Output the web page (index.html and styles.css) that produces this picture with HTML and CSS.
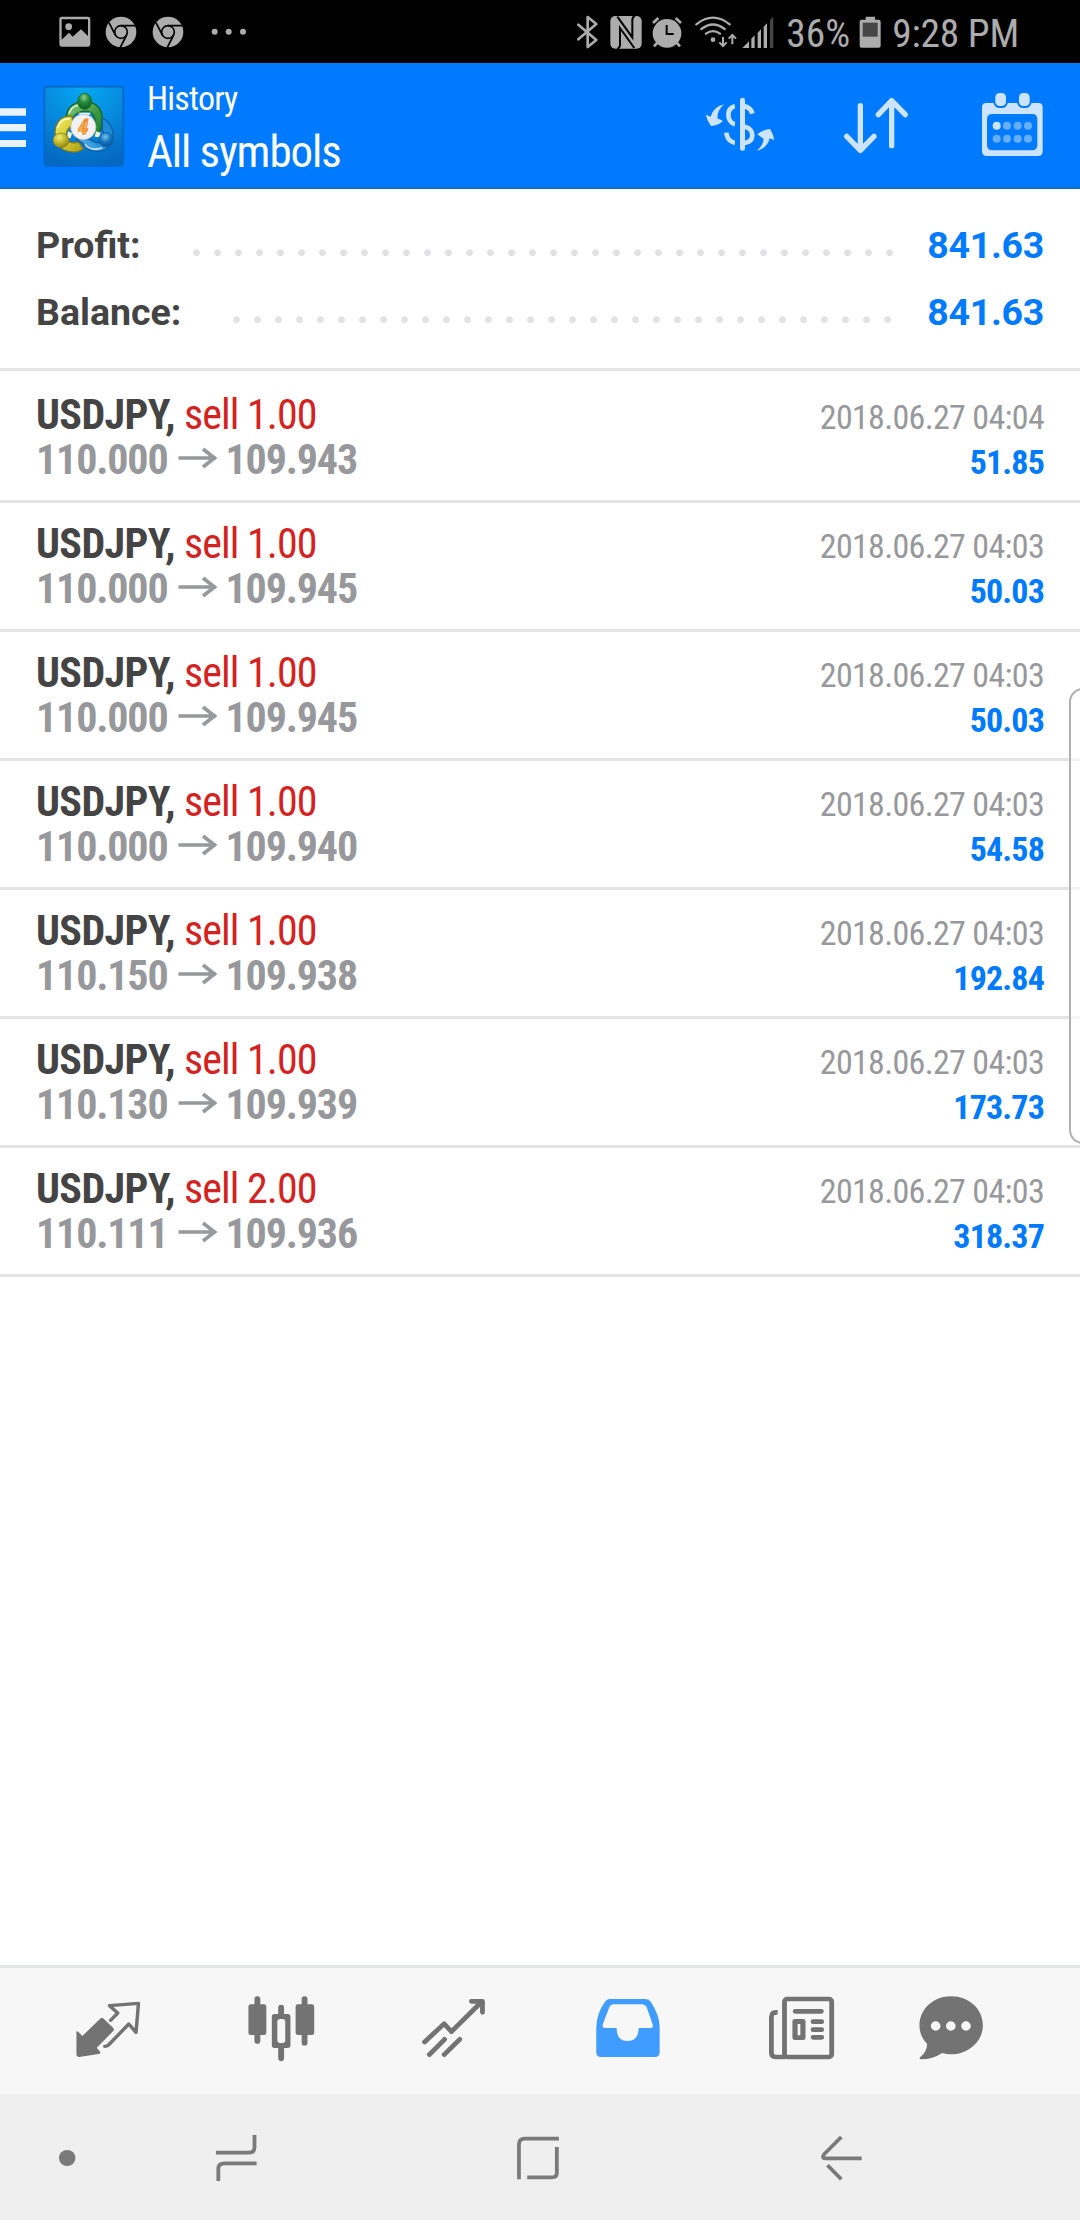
FILE: index.html
```html
<!DOCTYPE html>
<html lang="en">
<head>
<meta charset="utf-8">
<title>History</title>
<link rel="stylesheet" href="styles.css">
</head>
<body>
<div class="status">
  <svg class="st-icon" width="36" height="36" viewBox="170 40 108 108"><path fill-rule="evenodd" d="M184 48H263Q270 48 270 55V131Q270 138 263 138H184Q177 138 177 131V55Q177 48 184 48ZM184 56V117L206 96L217 108L242 86L263 106V56Z"/><circle cx="205" cy="78" r="10"/></svg>
  <svg class="st-icon" width="36" height="36" viewBox="310 40 108 108"><circle cx="364" cy="94" r="46"/><g class="chrome-lines"><circle cx="364" cy="94" r="19"/><path d="M364 75H408M347 103L328 66M381 103L361 142"/></g></svg>
  <svg class="st-icon" width="36" height="36" viewBox="310 40 108 108"><circle cx="364" cy="94" r="46"/><g class="chrome-lines"><circle cx="364" cy="94" r="19"/><path d="M364 75H408M347 103L328 66M381 103L361 142"/></g></svg>
  <svg class="st-more" width="36" height="36" viewBox="633 40 108 108"><circle cx="644" cy="93" r="9"/><circle cx="686" cy="93" r="9"/><circle cx="729" cy="93" r="9"/></svg>
  <div class="st-right">
    <svg width="24" height="36" viewBox="44 40 72 108"><path class="bt-line" d="M54 72L108 118L82 139V49L108 70L54 116"/></svg>
    <svg class="st-nfc" width="34" height="36" viewBox="148 40 102 108"><rect x="152" y="46" width="94" height="98" rx="15"/><path class="ink-line" d="M173 48L218 110V58Q218 50 226 45M224 142L181 82V132Q181 140 173 145"/></svg>
    <svg class="st-alarm" width="34" height="36" viewBox="270 40 102 108"><circle cx="321" cy="98" r="43"/><path class="alarm-line" d="M279 67L295 52M363 67L347 52M291 127L282 137M351 127L360 137"/><path class="alarm-hand" d="M320 73V100H341"/></svg>
    <svg class="st-wifi" width="44" height="36" viewBox="402 40 132 108"><path class="wifi-line" d="M409 71Q459 31 509 71M424 85Q459 58 494 85M438 99Q459 84 480 99"/><circle cx="459" cy="117" r="7"/><path class="wifi-arrow" d="M489 109V135M478 125L489 136L500 125M517 131V104M506 114L517 103L528 114"/></svg>
    <svg class="st-signal" width="34" height="36" viewBox="544 40 102 108"><path d="M548 142L568 122V142ZM575 142V114L585 104V142ZM594 142V96L604 86V142ZM612 142V78L622 68V142Z"/><path class="dim" d="M631 142V58L641 48V142Z"/></svg>
    <span class="st-pct">36%</span>
    <svg class="st-batt" width="22" height="36" viewBox="898 40 66 108"><path d="M918 48H946V57H957Q963 57 963 63V135Q963 141 957 141H906Q900 141 900 135V63Q900 57 906 57H918Z"/><rect class="dim" x="909" y="66" width="45" height="42"/></svg>
    <span class="st-time">9:28 PM</span>
  </div>
</div>

<header class="appbar">
  <svg class="burger" width="26" height="84" viewBox="0 252 78 252"><path d="M0 325H78V347H0ZM0 372H78V394H0ZM0 420H78V441H0Z"/></svg>
  <svg class="logo" width="84" height="84" viewBox="18 18 252 252">
    <defs>
      <radialGradient id="sky" cx=".5" cy="0" r="1"><stop offset="0" stop-color="#06a9f3"/><stop offset=".55" stop-color="#0688dc"/><stop offset="1" stop-color="#0468c0"/></radialGradient>
      <linearGradient id="green" x1="0" y1="0" x2="1" y2="1"><stop offset="0" stop-color="#8fd080"/><stop offset=".6" stop-color="#38963f"/><stop offset="1" stop-color="#1f7a30"/></linearGradient>
      <linearGradient id="gold" x1="0" y1="0" x2="1" y2="1"><stop offset="0" stop-color="#f3ee62"/><stop offset=".6" stop-color="#cdc32c"/><stop offset="1" stop-color="#a99c1a"/></linearGradient>
      <linearGradient id="blue" x1="1" y1="0" x2="0" y2="1"><stop offset="0" stop-color="#1a86d0"/><stop offset=".6" stop-color="#2a92dc"/><stop offset="1" stop-color="#7cc6f5"/></linearGradient>
      <radialGradient id="gball" cx=".45" cy=".25" r=".7"><stop offset="0" stop-color="#8ed08b"/><stop offset=".5" stop-color="#26893b"/><stop offset="1" stop-color="#0e6426"/></radialGradient>
      <radialGradient id="yball" cx=".4" cy=".3" r=".7"><stop offset="0" stop-color="#f0ec7c"/><stop offset=".5" stop-color="#c6bb2e"/><stop offset="1" stop-color="#8f861a"/></radialGradient>
      <radialGradient id="bball" cx=".45" cy=".3" r=".7"><stop offset="0" stop-color="#7cc3ee"/><stop offset=".5" stop-color="#1777c0"/><stop offset="1" stop-color="#0a559a"/></radialGradient>
    </defs>
    <rect x="25" y="26" width="237" height="238" rx="9" fill="url(#sky)" stroke="#0667c4" stroke-width="5"/>
    <g stroke-linejoin="round">
      <path d="M92 134Q86 94 113 79Q146 60 178 79Q204 96 198 139Q194 166 180 172Q172 160 178 142Q178 112 164 103Q145 94 124 106Q108 118 108 124Z" fill="url(#green)" stroke="#17652b" stroke-width="4"/>
      <path d="M108 115Q72 110 59 146Q50 196 84 216Q118 230 142 213L128 192Q104 199 93 185Q82 160 112 139Z" fill="url(#gold)" stroke="#7d7c1c" stroke-width="4"/>
      <path d="M199 121Q222 128 231 160Q236 205 197 219Q161 226 140 196L120 182Q150 180 162 184Q183 202 201 188Q208 170 199 156Z" fill="url(#blue)" stroke="#0c5da5" stroke-width="4"/>
      <path d="M65 148Q75 120 100 123M100 105Q108 84 124 83M148 201Q165 220 197 210" fill="none" stroke="#fff" stroke-opacity=".7" stroke-width="5" stroke-linecap="round"/>
      <path d="M96 160L108 166L104 181L92 180ZM180 160L194 164L190 178L176 176ZM126 104L166 104L158 111H132Z" fill="#e9f3da"/>
    </g>
    <ellipse cx="146" cy="70" rx="21" ry="24" fill="url(#gball)" stroke="#126327" stroke-width="2"/>
    <ellipse cx="75" cy="187" rx="24" ry="22" fill="url(#yball)" stroke="#7d7c1c" stroke-width="2"/>
    <ellipse cx="210" cy="185" rx="22" ry="21" fill="url(#bball)" stroke="#0c5da5" stroke-width="2"/>
    <circle cx="142" cy="147" r="38" fill="#f1f1f4" stroke="#b5b7b4" stroke-width="2"/>
    <text class="logo-num" x="142" y="169" text-anchor="middle">4</text>
  </svg>
  <div class="titles">
    <div class="title">History</div>
    <div class="subtitle">All symbols</div>
  </div>
  <div class="actions">
    <svg width="72" height="72" viewBox="72 90 216 216"><path class="s14" d="M194 139Q212 142 217 161M194 200Q217 205 217 226Q217 246 194 249M165 138Q145 144 145 165Q146 187 165 193M139 218Q141 243 165 249"/><path class="gap" d="M172.500 112V275"/><path class="s15" d="M187.500 121V265"/><path d="M132 133Q112 150 112 175L129 183Q115 197 93 198Q82 183 77 164L92 170Q100 140 132 133ZM230 272Q249 258 251 237L232 223Q250 208 270 207Q280 222 283 240L269 235Q262 265 230 272Z"/></svg>
    <svg width="72" height="72" viewBox="480 90 216 216"><path class="s16" d="M541 137V270M500 229L541 271L582 229M635 257V122M595 164L635 122L676 164"/></svg>
    <svg width="72" height="72" viewBox="888 90 216 216"><path fill-rule="evenodd" d="M919 129H1075Q1088 129 1088 142V274Q1088 288 1074 288H920Q906 288 906 274V142Q906 129 919 129ZM937 162Q921 162 921 178V256Q921 271 937 271H1056Q1072 271 1072 256V178Q1072 162 1056 162Z"/><rect class="tab-gap" x="946" y="99" width="32" height="39" rx="13"/><rect class="tab-gap" x="1017" y="99" width="32" height="39" rx="13"/><circle cx="950" cy="197" r="12"/><g class="soft"><circle cx="981" cy="197" r="12"/><circle cx="1013" cy="197" r="12"/><circle cx="1044" cy="197" r="12"/><circle cx="950" cy="236" r="12"/><circle cx="981" cy="236" r="12"/><circle cx="1013" cy="236" r="12"/><circle cx="1044" cy="236" r="12"/></g></svg>
  </div>
</header>

<section class="summary">
  <div class="sum-row"><span class="sum-label">Profit:</span><span class="leader"></span><span class="sum-value">841.63</span></div>
  <div class="sum-row"><span class="sum-label">Balance:</span><span class="leader"></span><span class="sum-value">841.63</span></div>
</section>

<main class="deals">
  <article class="deal">
    <div class="line"><span><b class="symbol">USDJPY,</b> <span class="side">sell 1.00</span></span><time class="date">2018.06.27 04:04</time></div>
    <div class="line"><span class="prices">110.000<svg class="arrow" width="42" height="24" viewBox="0 0 42 24"><path d="M2.500 12H40M27 3L38.500 12L27 21"/></svg>109.943</span><span class="gain">51.85</span></div>
  </article>
  <article class="deal">
    <div class="line"><span><b class="symbol">USDJPY,</b> <span class="side">sell 1.00</span></span><time class="date">2018.06.27 04:03</time></div>
    <div class="line"><span class="prices">110.000<svg class="arrow" width="42" height="24" viewBox="0 0 42 24"><path d="M2.500 12H40M27 3L38.500 12L27 21"/></svg>109.945</span><span class="gain">50.03</span></div>
  </article>
  <article class="deal">
    <div class="line"><span><b class="symbol">USDJPY,</b> <span class="side">sell 1.00</span></span><time class="date">2018.06.27 04:03</time></div>
    <div class="line"><span class="prices">110.000<svg class="arrow" width="42" height="24" viewBox="0 0 42 24"><path d="M2.500 12H40M27 3L38.500 12L27 21"/></svg>109.945</span><span class="gain">50.03</span></div>
  </article>
  <article class="deal">
    <div class="line"><span><b class="symbol">USDJPY,</b> <span class="side">sell 1.00</span></span><time class="date">2018.06.27 04:03</time></div>
    <div class="line"><span class="prices">110.000<svg class="arrow" width="42" height="24" viewBox="0 0 42 24"><path d="M2.500 12H40M27 3L38.500 12L27 21"/></svg>109.940</span><span class="gain">54.58</span></div>
  </article>
  <article class="deal">
    <div class="line"><span><b class="symbol">USDJPY,</b> <span class="side">sell 1.00</span></span><time class="date">2018.06.27 04:03</time></div>
    <div class="line"><span class="prices">110.150<svg class="arrow" width="42" height="24" viewBox="0 0 42 24"><path d="M2.500 12H40M27 3L38.500 12L27 21"/></svg>109.938</span><span class="gain">192.84</span></div>
  </article>
  <article class="deal">
    <div class="line"><span><b class="symbol">USDJPY,</b> <span class="side">sell 1.00</span></span><time class="date">2018.06.27 04:03</time></div>
    <div class="line"><span class="prices">110.130<svg class="arrow" width="42" height="24" viewBox="0 0 42 24"><path d="M2.500 12H40M27 3L38.500 12L27 21"/></svg>109.939</span><span class="gain">173.73</span></div>
  </article>
  <article class="deal">
    <div class="line"><span><b class="symbol">USDJPY,</b> <span class="side">sell 2.00</span></span><time class="date">2018.06.27 04:03</time></div>
    <div class="line"><span class="prices">110.111<svg class="arrow" width="42" height="24" viewBox="0 0 42 24"><path d="M2.500 12H40M27 3L38.500 12L27 21"/></svg>109.936</span><span class="gain">318.37</span></div>
  </article>
</main>

<nav class="tabs">
  <svg width="72" height="72" viewBox="209.100 135 209 216" preserveAspectRatio="none"><path d="M222 245Q223 242 227 245L239 258L291 206Q296 200 301 206L329 234Q333 239 328 244L281 293L292 307Q292 312 286 312L230 321Q222 321 222 313Z"/><path class="t10" d="M321 211L342 189L318 167L402 160L395 247L374 222L315 285Q311 289 304 289"/></svg>
  <svg width="72" height="72" viewBox="713 135 209 216" preserveAspectRatio="none"><path class="t17" d="M746 147V273M815 173V195M815 290V325M883 147V278"/><rect x="720" y="163" width="52" height="92" rx="7"/><path fill-rule="evenodd" d="M796 192H834Q842 192 842 200V286Q842 294 834 294H796Q788 294 788 286V200Q788 192 796 192ZM812 207Q804 207 804 215V271Q804 279 812 279H819Q827 279 827 271V215Q827 207 819 207Z"/><rect x="857" y="163" width="54" height="92" rx="7"/></svg>
  <svg width="72" height="72" viewBox="1216.800 135 209 216" preserveAspectRatio="none"><path class="t14" d="M1233 276L1290 221L1311 245L1398 156M1369 154H1401V187M1247 314L1291 268M1290 314L1335 268"/></svg>
  <svg class="active" width="72" height="72" viewBox="152.500 135 209 216" preserveAspectRatio="none"><path fill-rule="evenodd" d="M200 147H305Q315 147 320 155Q346 195 346 232V307Q346 321 332 321H175Q162 321 162 307V232Q163 190 187 156Q193 147 200 147ZM212 163Q203 163 199 174L181 223Q178 234 188 234H221Q221 273 252 273Q285 273 285 234H318Q328 234 326 224L309 174Q305 163 293 163Z"/></svg>
  <svg width="72" height="72" viewBox="656.300 135 209 216" preserveAspectRatio="none"><rect class="t14" x="710" y="147" width="137" height="174" rx="8"/><path class="t14 butt" d="M690 187Q672 186 672 200V308Q672 321 688 321H712"/><path class="t14" d="M741 184H817M793 215H818M793 239H818M793 262H818"/><path fill-rule="evenodd" d="M740 207H764Q771 207 771 214V263Q771 270 764 270H740Q733 270 733 263V214Q733 207 740 207ZM748 222V256H756V222Z"/></svg>
  <svg width="72" height="72" viewBox="1089 135 209 216" preserveAspectRatio="none"><path fill-rule="evenodd" d="M1193 139C1247 139 1286 178 1286 226C1286 275 1243 313 1193 313Q1180 313 1168 309Q1140 328 1108 328Q1099 328 1104 322Q1124 305 1124 281C1110 267 1102 249 1102 226C1102 178 1142 139 1193 139ZM1135 228A14 14 0 1 0 1163 228A14 14 0 1 0 1135 228ZM1179 228A14 14 0 1 0 1207 228A14 14 0 1 0 1179 228ZM1223 228A14 14 0 1 0 1251 228A14 14 0 1 0 1223 228Z"/></svg>
</nav>

<footer class="sysnav">
  <svg class="nav-dot" width="60" height="60" viewBox="107.400 531 174.200 180" preserveAspectRatio="none"><circle cx="195" cy="624" r="24"/></svg>
  <svg class="nav-recents" width="60" height="60" viewBox="598.200 531 174.200 180" preserveAspectRatio="none"><path d="M627 608H722Q739 608 739 592V555M745 640H652Q634 640 634 656V693"/></svg>
  <svg class="nav-home" width="60" height="60" viewBox="1475.200 531 174.200 180" preserveAspectRatio="none"><path d="M1507 688V584Q1507 566 1524 566H1623M1531 682H1602Q1617 682 1617 668V591"/></svg>
  <svg class="nav-back" width="60" height="60" viewBox="789.900 531 174.200 180" preserveAspectRatio="none"><path d="M875 561L825 613Q817 625 829 625H934M835 646L875 688"/></svg>
</footer>

<div class="edge-panel"></div>
</body>
</html>
```
FILE: styles.css
```css
* { box-sizing: border-box; }
html, body { margin: 0; }
body {
  position: relative;
  display: flex;
  flex-direction: column;
  width: 1080px;
  height: 2220px;
  overflow: hidden;
  background: #fff;
  font-family: "Roboto Condensed", Roboto, sans-serif;
  color: #444;
}
svg { display: block; flex: none; }

/* Status bar */
.status {
  display: flex;
  align-items: center;
  height: 63px;
  padding-left: 56.7px;
  background: #000;
  color: #acacac;
  fill: #acacac;
  font-size: 39.4px;
  line-height: 54px;
}
.st-icon { margin-right: 10.7px; }
.st-more { margin-left: 14px; }
.chrome-lines { fill: none; stroke: #000; stroke-width: 5; }
.st-right { display: flex; align-items: center; margin-left: auto; width: 505.3px; }
.bt-line { fill: none; stroke: #acacac; stroke-width: 8; stroke-linejoin: round; stroke-linecap: round; }
.st-nfc { margin-left: 10px; }
.ink-line { fill: none; stroke: #000; stroke-width: 6; }
.st-alarm { margin-left: 7.3px; }
.alarm-line { fill: none; stroke: #acacac; stroke-width: 8; }
.alarm-hand { fill: none; stroke: #000; stroke-width: 6; }
.st-wifi { margin-left: 10px; }
.wifi-line, .wifi-arrow { fill: none; stroke: #acacac; stroke-width: 7; stroke-linecap: round; }
.wifi-arrow { stroke-width: 6; stroke-linecap: butt; }
.st-signal { margin-left: 3.3px; }
.dim { fill: #464646; }
.st-pct { width: 73px; margin-left: 11px; padding-top: 4px; }
.st-time { margin-left: 11px; padding-top: 4px; white-space: nowrap; letter-spacing: -.2px; }

/* App bar */
.appbar {
  display: flex;
  align-items: center;
  height: 126px;
  background: #007aff;
  box-shadow: inset 0 -2px #1468c8;
  color: #fff;
}
.burger { fill: #e8f3ff; }
.logo { margin-left: 16px; }
.logo-num { font: italic 700 62px "Roboto Condensed", Roboto, sans-serif; fill: #fbc27a; stroke: #ee8b22; stroke-width: 3; }
.titles { align-self: flex-start; padding-top: 15px; margin-left: 21px; white-space: nowrap; }
.title { font-size: 34px; line-height: 40px; letter-spacing: -.8px; }
.subtitle { margin-top: 7px; font-size: 45px; line-height: 54px; letter-spacing: -1.1px; }
.actions { display: flex; gap: 64px; margin-left: auto; padding-right: 32px; fill: #cce4ff; }
.s14, .s15, .s16 { fill: none; stroke: #cce4ff; stroke-width: 14; stroke-linecap: round; stroke-linejoin: round; }
.s14 { stroke-linecap: butt; }
.s15 { stroke-width: 15; }
.s16 { stroke-width: 16; }
.gap { fill: none; stroke: #007aff; stroke-width: 15; }
.tab-gap { stroke: #007aff; stroke-width: 12; paint-order: stroke; }
.soft { fill: #66afff; }

/* Totals */
.summary { height: 182px; padding: 23px 36px 0; border-bottom: 3px solid #e4e4e5; }
.sum-row {
  display: flex;
  height: 67px;
  font: 700 37.5px/67px Roboto, sans-serif;
}
.sum-value { color: #007aff; letter-spacing: -.3px; }
.leader {
  flex: 1;
  margin: 0 22px 0 45px;
  background: radial-gradient(circle at 10.5px 40.7px, #e2e2e4 3px, transparent 3.8px) 0 0 / 21px 67px repeat-x;
}

/* Deals */
.deals { flex: 1; padding-top: 3px; }
.deal { height: 129px; padding: 18px 36px; border-bottom: 3px solid #e4e4e5; }
.line {
  display: flex;
  justify-content: space-between;
  align-items: baseline;
  height: 45px;
  font-size: 42px;
  line-height: 45px;
  letter-spacing: -.6px;
  white-space: nowrap;
}
.symbol { font-weight: 700; }
.side { color: #d42221; letter-spacing: -.95px; }
.date { font-size: 34px; color: #97989b; letter-spacing: -.68px; }
.prices { font-weight: 700; color: #97989b; letter-spacing: -1.15px; }
.gain { font-size: 34px; font-weight: 700; color: #007aff; letter-spacing: -.85px; }
.arrow { display: inline-block; margin: 0 8px; vertical-align: 4px; fill: none; stroke: #97989b; stroke-width: 3.6; }

/* Bottom tabs */
.tabs {
  display: grid;
  grid-template-columns: repeat(5, 173.5px) 124.5px;
  justify-items: center;
  align-items: center;
  height: 129px;
  padding-left: 21.25px;
  border-top: 3px solid #e4e5e5;
  background: #f7f7f7;
  fill: #737373;
}
.t10, .t14, .t17 { fill: none; stroke: #737373; stroke-width: 14; stroke-linecap: round; stroke-linejoin: round; }
.t10 { stroke-width: 10; }
.t17 { stroke-width: 17; }
.butt { stroke-linecap: butt; }
.active { fill: #419cff; }

/* System navigation */
.sysnav {
  display: flex;
  align-items: center;
  height: 126px;
  padding-left: 37px;
  background: #efefef;
  fill: none;
  stroke: #7a7a7a;
  stroke-width: 11;
}
.nav-dot { fill: #7a7a7a; stroke: none; }
.nav-recents { margin-left: 109px; }
.nav-home { margin-left: 242px; }
.nav-back { margin-left: 244px; }

/* Edge handle that hangs over the list */
.edge-panel {
  position: absolute;
  top: 688px;
  left: 1069px;
  width: 30px;
  height: 456px;
  border: 2px solid #b0b0b2;
  border-radius: 14px;
  background: rgba(255, 255, 255, .6);
}
```
